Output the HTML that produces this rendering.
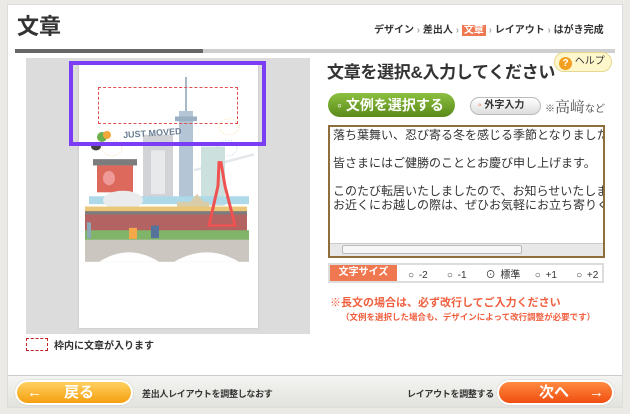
<!DOCTYPE html>
<html><head><meta charset="utf-8"><style>
*{margin:0;padding:0;box-sizing:border-box}
body{width:630px;height:414px;background:#ebeae6;font-family:"Liberation Sans","Noto Sans CJK JP",sans-serif;position:relative;overflow:hidden;color:#333}
.abs{position:absolute}
</style></head><body>
<div class="abs" style="left:7px;top:4px;width:616px;height:404px;background:#fff;border:1px solid #ddd"></div>
<div class="abs" style="left:17px;top:9px;font-size:22px;font-weight:bold;color:#333">文章</div>
<div class="abs" style="left:374px;top:21px;font-size:10px;font-weight:bold;color:#333;white-space:nowrap">デザイン <span style="color:#aaa">›</span> 差出人 <span style="color:#aaa">›</span> <span style="background:#f07850;color:#fff;padding:0 2px">文章</span> <span style="color:#aaa">›</span> レイアウト <span style="color:#aaa">›</span> はがき完成</div>
<div class="abs" style="left:15px;top:49px;width:600px;height:4px;background:#cfcfcf"></div>
<div class="abs" style="left:15px;top:49px;width:188px;height:4px;background:#666"></div>

<div class="abs" style="left:26px;top:58px;width:284px;height:276px;background:#dcdcdc"></div>
<div class="abs" style="left:79px;top:65px;width:179px;height:263px;background:#fff;box-shadow:0 0 2px #bbb"></div>
<svg class="abs" style="left:79px;top:65px" width="179" height="263" viewBox="0 0 179 263">
<g transform="translate(0,2.5) scale(1,0.79)" opacity="0.85">
<line x1="107" y1="12" x2="107" y2="80" stroke="#9aaec0" stroke-width="2"/>
<rect x="100" y="55" width="14" height="125" fill="#a8bccf"/>
<rect x="96" y="62" width="22" height="6" fill="#8aa2b8"/>
<circle cx="150" cy="75" r="10" fill="none" stroke="#f2d27a" stroke-dasharray="1 2"/>
<circle cx="33" cy="102" r="10" fill="none" stroke="#f2c27a" stroke-dasharray="1 2"/>
<circle cx="148" cy="102" r="10" fill="none" stroke="#a8c8e8" stroke-dasharray="1 2"/>
<circle cx="17" cy="100" r="5" fill="#222"/>
<rect x="64" y="85" width="30" height="80" fill="#c9ccd1"/>
<rect x="72" y="105" width="14" height="55" fill="#e5e6e8"/>
<line x1="115" y1="130" x2="175" y2="110" stroke="#dde3e8" stroke-width="3"/>
<rect x="122" y="100" width="24" height="75" fill="#c4dcd8"/>
<rect x="10" y="163" width="160" height="10" fill="#9fd3e4"/>
<rect x="14" y="116" width="44" height="8" fill="#666"/>
<rect x="18" y="124" width="36" height="34" fill="#d85040"/>
<ellipse cx="30" cy="140" rx="6" ry="9" fill="#e88"/>
<ellipse cx="44" cy="168" rx="20" ry="12" fill="#e6e8ea"/>
<path d="M108 175 L118 160 L128 175 Z" fill="#d3c49a"/>
<rect x="98" y="170" width="32" height="18" fill="#d3c49a"/>
<rect x="6" y="176" width="162" height="8" fill="#e6be60"/>
<rect x="6" y="182" width="162" height="26" fill="#a84848"/>
<rect x="6" y="182" width="162" height="4" fill="#666"/>
<path d="M140 120 L142 120 L146 150 L156 200 L130 200 L139 150 Z" fill="none" stroke="#e33" stroke-width="3"/>
<rect x="6" y="206" width="164" height="14" fill="#6aa850"/>
<rect x="6" y="218" width="164" height="28" fill="#c4bdb6"/>
<path d="M20 246 Q50 222 80 246 Z M95 246 Q128 222 160 246 Z" fill="#fff"/>
<rect x="50" y="203" width="8" height="14" fill="#f39a2a"/><rect x="72" y="200" width="8" height="16" fill="#3a5a8a"/>
<rect x="8" y="196" width="4" height="20" fill="#7a9aaa"/>
</g>
<text x="44" y="72" font-size="9" font-weight="bold" fill="#6a7f94" font-family="Liberation Sans" transform="rotate(-4 60 68)">JUST MOVED</text>
<circle cx="23" cy="72" r="5" fill="#6ab04c"/><circle cx="28" cy="70" r="4" fill="#f3a63a"/>
</svg>
<div class="abs" style="left:69px;top:61px;width:197px;height:85px;border:4px solid #7b3cf5"></div>
<div class="abs" style="left:98px;top:87px;width:140px;height:37px;border:1px dashed #e05050"></div>

<div class="abs" style="left:26px;top:338px;width:22px;height:13px;border:1px dashed #c02020"></div>
<div class="abs" style="left:54px;top:337px;font-size:10px;font-weight:bold">枠内に文章が入ります</div>

<div class="abs" style="left:327px;top:58px;font-size:17px;font-weight:bold;color:#333;white-space:nowrap;letter-spacing:-0.3px">文章を選択&amp;入力してください</div>
<div class="abs" style="left:554px;top:52px;width:58px;height:20px;border-radius:10px;background:#fff7cc;border:1px solid #e5d890;font-size:10px;line-height:18px;padding-left:4px"><span style="display:inline-block;width:13px;height:13px;border-radius:50%;background:#f3a020;color:#fff;text-align:center;line-height:13px;font-weight:bold;font-size:10px;vertical-align:-2px">?</span> ヘルプ</div>
<div class="abs" style="left:328px;top:93px;width:127px;height:24px;border-radius:12px;background:linear-gradient(#8cc040,#5a8a1a);color:#fff;font-size:14px;font-weight:bold;line-height:24px;padding-left:9px">◦ 文例を選択する</div>
<div class="abs" style="left:470px;top:97px;width:71px;height:18px;border-radius:9px;background:linear-gradient(#fff,#ddd);border:1px solid #bbb;font-size:10px;font-weight:bold;line-height:16px;padding-left:7px"><span style="color:#f06030">◦</span> 外字入力</div>
<div class="abs" style="left:545px;top:96px;font-size:10px;color:#555;white-space:nowrap">※<span style="font-family:'Noto Serif CJK SC',serif;font-size:15px">高﨑</span>など</div>

<div class="abs" style="left:328px;top:125px;width:277px;height:133px;border:2px solid #8f6e3e;background:#fff;overflow:hidden">
<div style="padding:1px 3px;font-size:12px;line-height:14px;color:#333;white-space:nowrap">落ち葉舞い、忍び寄る冬を感じる季節となりました。<br><br>皆さまにはご健勝のこととお慶び申し上げます。<br><br>このたび転居いたしましたので、お知らせいたします<br>お近くにお越しの際は、ぜひお気軽にお立ち寄りください</div>
<div class="abs" style="left:0;top:116px;width:273px;height:13px;background:#e8e8e8;border-top:1px solid #ccc"></div>
<div class="abs" style="left:12px;top:118px;width:180px;height:9px;background:#f6f6f6;border:1px solid #bbb;border-radius:2px"></div>
</div>
<div class="abs" style="left:328px;top:263px;width:276px;height:20px;border:2px solid #ddd;background:#fff"></div>
<div class="abs" style="left:330px;top:265px;width:67px;height:16px;background:#f07850;color:#fff;font-size:10px;font-weight:bold;line-height:16px;text-align:center">文字サイズ</div>
<div class="abs" style="left:408px;top:266px;font-size:10px;white-space:nowrap;word-spacing:2px;color:#333">○ -2 &nbsp;&nbsp;&nbsp;○ -1 &nbsp;&nbsp;&nbsp;⊙ 標準 &nbsp;&nbsp;○ +1 &nbsp;&nbsp;&nbsp;○ +2</div>
<div class="abs" style="left:330px;top:294px;font-size:11px;font-weight:bold;color:#f06040;white-space:nowrap">※長文の場合は、必ず改行してご入力ください</div>
<div class="abs" style="left:341px;top:311px;font-size:8.5px;font-weight:bold;color:#f06040;white-space:nowrap">（文例を選択した場合も、デザインによって改行調整が必要です）</div>

<div class="abs" style="left:8px;top:375px;width:614px;height:32px;background:linear-gradient(#f4f4f2,#e2e2de);border-top:1px solid #ccc"></div>
<div class="abs" style="left:15px;top:380px;width:118px;height:25px;border-radius:13px;background:linear-gradient(#ffd060,#f5a010);border:2px solid #fff;box-shadow:0 0 1px #999;color:#fff;font-size:15px;font-weight:bold;line-height:21px;white-space:nowrap"><span style="margin-left:10px">←</span><span style="margin-left:22px">戻る</span></div>
<div class="abs" style="left:142px;top:387px;font-size:9px;font-weight:bold;white-space:nowrap;letter-spacing:-0.3px">差出人レイアウトを調整しなおす</div>
<div class="abs" style="left:407px;top:387px;font-size:9px;font-weight:bold;white-space:nowrap;letter-spacing:-0.3px">レイアウトを調整する</div>
<div class="abs" style="left:497px;top:380px;width:117px;height:25px;border-radius:13px;background:linear-gradient(#ff8a40,#f04e10);border:2px solid #fff;box-shadow:0 0 1px #999;color:#fff;font-size:15px;font-weight:bold;line-height:21px;white-space:nowrap"><span style="margin-left:40px">次へ</span><span style="margin-left:20px">→</span></div>
</body></html>
